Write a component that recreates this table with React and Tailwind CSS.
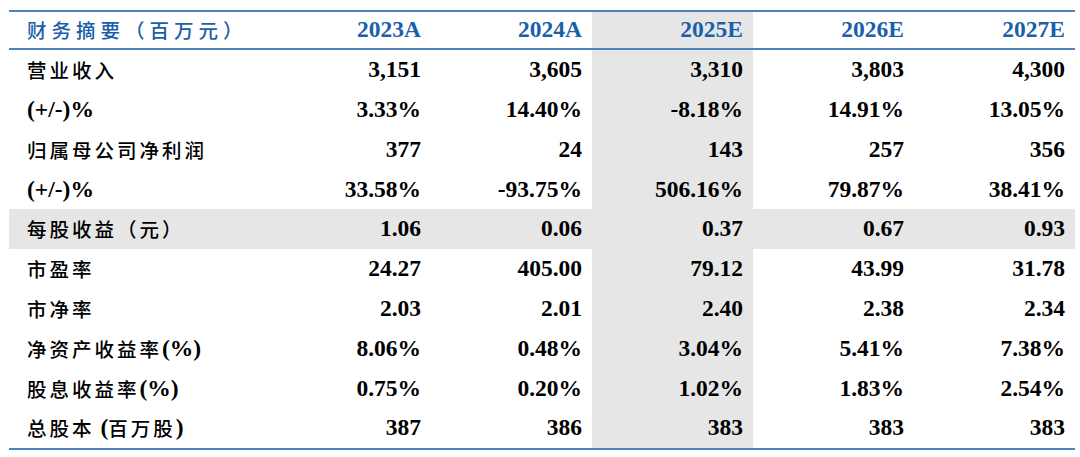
import React from "react";

const years = ["2023A", "2024A", "2025E", "2026E", "2027E"];

const rows = [
    {label: [["cjk", "营业收入"]], values: ["3,151", "3,605", "3,310", "3,803", "4,300"]},
    {label: [["lat", "(+/-)%"]], values: ["3.33%", "14.40%", "-8.18%", "14.91%", "13.05%"]},
    {label: [["cjk", "归属母公司净利润"]], values: ["377", "24", "143", "257", "356"]},
    {label: [["lat", "(+/-)%"]], values: ["33.58%", "-93.75%", "506.16%", "79.87%", "38.41%"]},
    {label: [["cjk", "每股收益（元）"]], values: ["1.06", "0.06", "0.37", "0.67", "0.93"], shaded: true},
    {label: [["cjk", "市盈率"]], values: ["24.27", "405.00", "79.12", "43.99", "31.78"]},
    {label: [["cjk", "市净率"]], values: ["2.03", "2.01", "2.40", "2.38", "2.34"]},
    {label: [["cjk", "净资产收益率"], ["lat", "(%)"]], values: ["8.06%", "0.48%", "3.04%", "5.41%", "7.38%"]},
    {label: [["cjk", "股息收益率"], ["lat", "(%)"]], values: ["0.75%", "0.20%", "1.02%", "1.83%", "2.54%"]},
    {label: [["cjk", "总股本"], ["lat", " ("], ["cjk", "百万股"], ["lat", ")"]], values: ["387", "386", "383", "383", "383"]},
];

const serif = "font-['Liberation_Serif','Times_New_Roman',serif]";
const cjk = "font-['Noto_Sans_CJK_SC',sans-serif]";

const Label = ({parts}) => (
    <div className="flex items-center pl-[18px] whitespace-pre">
        {parts.map(([kind, text], i) =>
            kind === "cjk"
                ? <span key={i} className={`${cjk} font-medium text-[19.5px] tracking-[3px] text-black`}>{text}</span>
                : <span key={i} className={`${serif} font-bold text-[23.5px] text-black`}>{text}</span>
        )}
    </div>
);

const Cell = ({children, col, shaded, head}) => (
    <div className={`flex items-center justify-end pr-[10px] ${serif} font-bold text-[23.5px] ${head ? "text-[#1a5fa9]" : "text-black"} ${col === 2 || shaded ? "bg-[#e6e6e6]" : ""}`}>
        {children}
    </div>
);

const App = () => {
    return <div className="w-[1080px] h-[457px] bg-white pt-[10px] pl-[9px]">
        <div className="w-[1066px] border-t-2 border-b-2 border-[#4f81bd]">
            <div className="grid grid-cols-[261px_repeat(5,161px)] h-[38px] border-b-2 border-[#4f81bd]">
                <div className="flex items-center pl-[18px]">
                    <span className={`${cjk} font-medium text-[19.5px] tracking-[5px] text-[#1a5fa9]`}>财务摘要（百万元）</span>
                </div>
                {years.map((y, i) => <Cell key={y} col={i} head>{y}</Cell>)}
            </div>
            {rows.map((r, ri) => (
                <div key={ri} className={`grid grid-cols-[261px_repeat(5,161px)] h-[39.8px] ${r.shaded ? "bg-[#e6e6e6]" : ""}`}>
                    <Label parts={r.label}/>
                    {r.values.map((v, i) => <Cell key={i} col={i} shaded={r.shaded}>{v}</Cell>)}
                </div>
            ))}
        </div>
    </div>
};

export default App;
